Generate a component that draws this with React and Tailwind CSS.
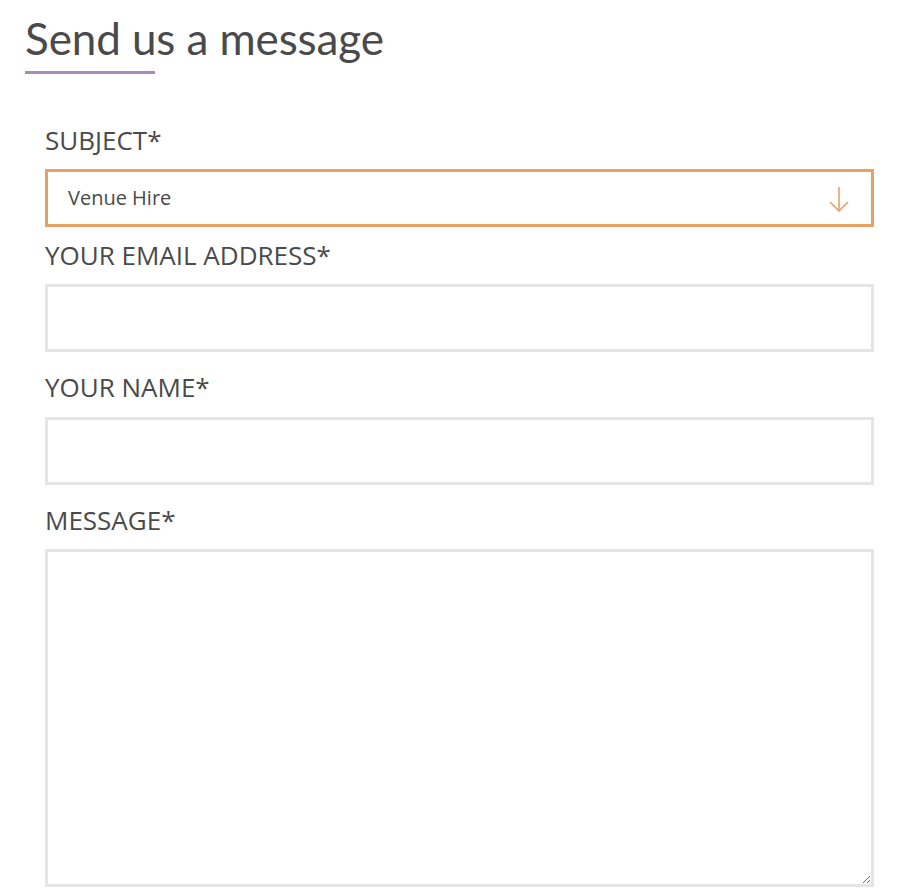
function Label({ children }) {
  return (
    <label className="block text-[26px] leading-[30px] text-[#4a4a4a] uppercase">
      {children}
    </label>
  )
}

export default function App() {
  return (
    <div className="w-[903px] h-[896px] bg-white overflow-hidden font-['Open_Sans',sans-serif]">
      <div className="pl-[25px] pt-[8px]">
        <h1 className="font-['Lato',sans-serif] text-[44px] leading-[60px] text-[#4a4a4a] tracking-[-0.1px]">
          Send us a message
        </h1>
        <div className="mt-[3px] w-[130px] h-[3px] bg-[#a78bbb]" />
      </div>

      <form className="pl-[45px] pr-[29px] pt-[51px]">
        <Label>Subject*</Label>
        <div className="mt-[14px] h-[58px] border-[3px] border-[#e8a064] flex items-center justify-between pl-[20px] pr-[22px]">
          <span className="text-[20px] text-[#4a4a4a]">Venue Hire</span>
          <svg width="20" height="26" viewBox="0 0 20 26" fill="none" stroke="#e8a064" strokeWidth="1.6" className="mt-[1px]">
            <line x1="10" y1="1" x2="10" y2="24.5" />
            <polyline points="1,16 10,25 19,16" />
          </svg>
        </div>

        <div className="mt-[13px]">
          <Label>Your email address*</Label>
        </div>
        <input className="mt-[14px] block w-full h-[68px] border-[3px] border-[#e5e5e5] outline-none" />

        <div className="mt-[20px]">
          <Label>Your name*</Label>
        </div>
        <input className="mt-[15px] block w-full h-[68px] border-[3px] border-[#e5e5e5] outline-none" />

        <div className="mt-[20px]">
          <Label>Message*</Label>
        </div>
        <textarea className="mt-[14px] block w-full h-[338px] border-[3px] border-[#e5e5e5] outline-none resize-y" />
      </form>
    </div>
  )
}
